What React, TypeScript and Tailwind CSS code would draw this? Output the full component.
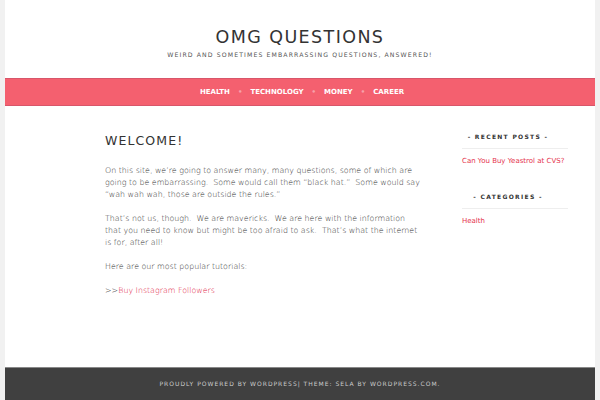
import React from "react";

const font = { fontFamily: '"DejaVu Sans", "Liberation Sans", sans-serif' };

export default function App() {
  return (
    <div className="min-h-[400px] bg-[#f1f1f1] px-[5px]" style={font}>
      <div className="bg-white">
        <header className="flex h-[78px] flex-col items-center pt-[26px]">
          <h1 className="text-[17.5px] leading-[22px] tracking-[1.4px] text-[#333]">OMG QUESTIONS</h1>
          <p className="mt-[3px] text-[6.2px] leading-[8px] tracking-[1.1px] text-[#555]">
            WEIRD AND SOMETIMES EMBARRASSING QUESTIONS, ANSWERED!
          </p>
        </header>
        <nav className="flex h-[28px] items-center justify-center border-y border-[#d8566a] bg-[#f4606f]">
          <ul className="ml-[4px] flex items-center text-[7px] font-bold text-white">
            <li>HEALTH</li>
            <li className="mx-[8px] text-[#f7a0aa]">•</li>
            <li>TECHNOLOGY</li>
            <li className="mx-[8px] text-[#f7a0aa]">•</li>
            <li>MONEY</li>
            <li className="mx-[8px] text-[#f7a0aa]">•</li>
            <li>CAREER</li>
          </ul>
        </nav>
        <div className="flex h-[261px]">
          <main className="ml-[100px] w-[316px] pt-[27px] text-[7.9px] font-extralight leading-[12px] text-[#333]">
            <h2 className="mb-[16px] text-[12.5px] font-normal leading-[16px] tracking-[1.1px] text-[#333]">WELCOME!</h2>
            <p className="mb-[12px]">
              On this site, we’re going to answer many, many questions, some of which are going to be embarrassing.&nbsp; Some would call them “black hat.”&nbsp; Some would say “wah wah wah, those are outside the rules.”
            </p>
            <p className="mb-[12px]">
              That’s not us, though.&nbsp; We are mavericks.&nbsp; We are here with the information that you need to know but might be too afraid to ask.&nbsp; That’s what the internet is for, after all!
            </p>
            <p className="mb-[12px]">Here are our most popular tutorials:</p>
            <p>
              &gt;&gt;<span className="text-[#e0213f]">Buy Instagram Followers</span>
            </p>
          </main>
          <aside className="ml-[41px] w-[106px] pt-[27px]">
            <h3 className="border-b border-[#eee] pb-[7px] pr-[14px] text-center text-[6px] font-bold leading-[8px] tracking-[1.3px] text-[#333]">
              - RECENT POSTS -
            </h3>
            <p className="mt-[7px] whitespace-nowrap text-[7px] leading-[10px] text-[#e5334d]">Can You Buy Yeastrol at CVS?</p>
            <h3 className="mt-[27px] border-b border-[#eee] pb-[7px] pr-[14px] text-center text-[6px] font-bold leading-[8px] tracking-[1.3px] text-[#333]">
              - CATEGORIES -
            </h3>
            <p className="mt-[7px] text-[7px] leading-[10px] text-[#e5334d]">Health</p>
          </aside>
        </div>
      </div>
      <footer className="flex h-[33px] items-center justify-center border-t border-[#888] bg-[#404040]">
        <p className="text-[6px] leading-[8px] tracking-[1px] text-[#ccc]">
          PROUDLY POWERED BY WORDPRESS| THEME: SELA BY WORDPRESS.COM.
        </p>
      </footer>
    </div>
  );
}
